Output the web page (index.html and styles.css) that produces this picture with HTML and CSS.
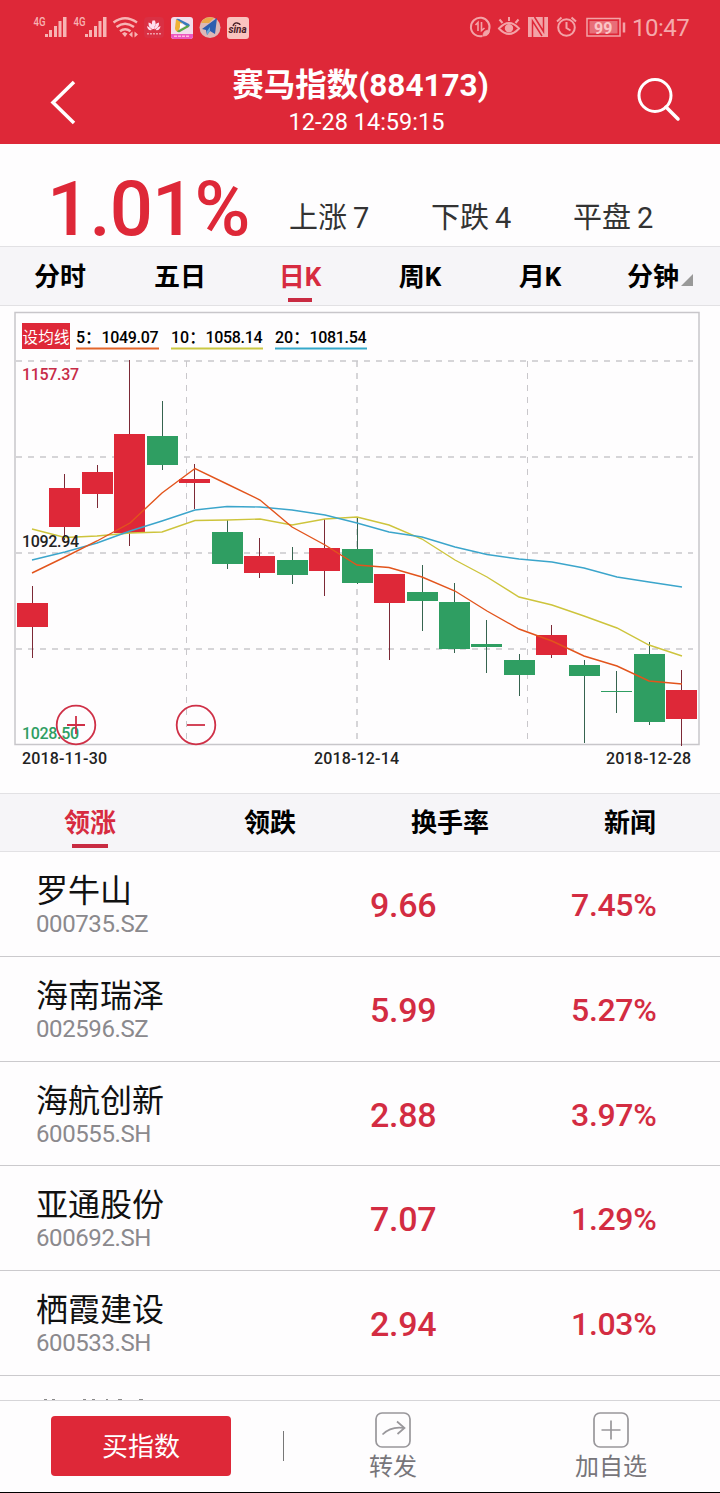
FILE: index.html
```html
<!DOCTYPE html>
<html lang="zh-CN">

<head>
    <meta charset="UTF-8">
    <title>赛马指数(884173)</title>
    <link rel="stylesheet" href="styles.css">
</head>

<body>
    <div class="app">
        <header class="header">
            <div class="status-bar">
                <svg class="status-left" width="220" height="28" viewBox="32 14 220 28">
                    <!-- signal -->
                    <g fill="#f7b3b3">
                        <text class="net" x="33.500" y="26" textLength="12" lengthAdjust="spacingAndGlyphs">4G</text>
                        <path d="M45 34h3v3h-3zM49 30h3v7h-3zM54 26h3v11h-3zM58.500 21h3v16h-3zM63 17h3.500v20h-3.500z" />
                        <text class="net" x="73.500" y="26" textLength="12" lengthAdjust="spacingAndGlyphs">4G</text>
                        <path d="M85 34h3v3h-3zM89 30h3v7h-3zM94 26h3v11h-3zM98.500 21h3v16h-3zM103 17h3.500v20h-3.500z" />
                    </g>
                    <!-- wifi -->
                    <g fill="none" stroke="#f7b3b3" stroke-width="2.400">
                        <path d="M113.500 22.500q11.500-8.500 23.500 0M116.500 27q8.500-6.500 17.500 0M120 31.300q5-4 10.500 0" />
                    </g>
                    <path fill="#f7b3b3" d="M122 33.500l2.500-1.500 3 1.500-2.500 3.500zM129 34.500l3.500-3v6zM138 34.500l-3.500-3v6z" />
                    <!-- app icons -->
                    <rect x="144" y="17" width="20" height="21" rx="4" fill="#d93043" />
                    <path fill="#fde" d="M153 29.500q-5-2-4.500-7 5 1 4.500 7zM154.500 29.500q5-2 4.500-7-5 1-4.500 7zM153 29q-2-5-.5-8.500h2.500q1.500 4-1 8.500zM152 30q-4.500 1-5-4 3 1 5 4zM155.500 30q4.500 1 5-4-3 1-5 4z" />
                    <path stroke="#f09aa5" stroke-width="1.600" stroke-dasharray="2 1" d="M147 33.700h14" />
                    <rect x="171" y="17" width="22" height="22" rx="3" fill="#f3ddeb" />
                    <path fill="#ec57c0" d="M171 34h22v2a3 3 0 0 1-3 3h-16a3 3 0 0 1-3-3z" />
                    <path fill="#efb236" d="M176 19l6 3-4 10q-3-1-3-4z" />
                    <path fill="#3979bb" d="M176 19q2-1 5 1l8 4q2 2-1 3z" />
                    <path fill="#58a846" d="M177 31l11-6q2 2-1 3l-7 4q-2 1-3-1z" />
                    <path fill="#fff" d="M180 23l5 2.700-5 2.800z" />
                    <path stroke="#fbd" stroke-width="1.500" stroke-dasharray="3 1" d="M174 36.200h16" />
                    <circle cx="210" cy="27.500" r="10.500" fill="#dbb9b7" />
                    <path fill="#eaa94a" d="M201 23a10 10 0 0 1 13-5l-5 5z" />
                    <path fill="#2c5eaf" d="M202 29l15-11-2 16-5-3-3 4-1-5z" />
                    <path fill="#69a9d8" d="M207 31l3-4v4l-3 4z" />
                    <rect x="227" y="17" width="22" height="22" rx="3" fill="#fac3bf" />
                    <text class="sina" x="228.500" y="33">sina</text>
                    <path d="M233 26q1-3.500 4-3t3 2" fill="none" stroke="#4b2027" stroke-width="1.300" />
                </svg>
                <svg class="status-right" width="158" height="28" viewBox="468 14 158 28">
                    <g fill="none" stroke="#f3a3a7" stroke-width="2">
                        <path d="M489 30a9.300 9.300 0 1 0-6.500 6" />
                        <path d="M475.500 25l2.500-2.500V31M481.500 22v8.500l3-2.500" stroke-width="1.600" />
                        <path fill="#f3a3a7" d="M483 36q0-6 6.500-6 0 6-6.500 6z" stroke-width="1" />
                        <path d="M499 28.500q10-11 20 0-10 11-20 0zM509 21v-4M502.500 23l-3-3.500M515.500 23l3-3.500" />
                        <circle cx="509" cy="28.300" r="3.200" fill="#f3a3a7" />
                        <circle cx="566.500" cy="27.500" r="8.300" />
                        <path d="M566.500 22v6l4 2.500M557 21.500l4.500-4M576 21.500l-4.500-4" />
                        <rect x="587" y="18.500" width="33" height="17.500" stroke-width="1.500" />
                        <path d="M624 22.500v10" stroke-width="2.500" />
                    </g>
                    <!-- nfc -->
                    <rect x="528" y="17" width="20" height="20" fill="#f3a3a7" />
                    <path fill="none" stroke="#de2838" stroke-width="1.500" d="M532.500 37V21l9.500 15M534.500 17l9 14.500V17" />
                    <rect x="589.500" y="21" width="28" height="12.500" fill="#e86e78" />
                    <text class="battery" x="594" y="33.500">99</text>
                </svg>
                <span class="clock">10:47</span>
            </div>
            <div class="nav">
                <svg class="back" width="32" height="48" viewBox="0 0 32 48">
                    <path d="M25 4L4 24.500 25 45" fill="none" stroke="#fff" stroke-width="3.500" />
                </svg>
                <div class="nav-title">
                    <h1>赛马指数(884173)</h1>
                    <p>12-28 14:59:15</p>
                </div>
                <svg class="search" width="48" height="48" viewBox="0 0 48 48">
                    <circle cx="21" cy="20.500" r="16" fill="none" stroke="#fff" stroke-width="3" />
                    <path d="M32 32l12 12" stroke="#fff" stroke-width="3.500" stroke-linecap="round" />
                </svg>
            </div>
        </header>

        <section class="summary">
            <div class="change">1.01%</div>
            <div class="stat">上涨<span>7</span></div>
            <div class="stat">下跌<span>4</span></div>
            <div class="stat">平盘<span>2</span></div>
        </section>

        <nav class="tabs period">
            <a class="tab">分时</a>
            <a class="tab">五日</a>
            <a class="tab active">日K</a>
            <a class="tab">周K</a>
            <a class="tab">月K</a>
            <a class="tab">分钟<i class="corner"></i></a>
        </nav>

        <svg class="chart" width="720" height="487" viewBox="0 306 720 487">
            <!-- frame and grid -->
            <path class="frame" d="M15 312.500H699V744.500H15z" />
            <g class="grid">
                <path d="M16 361H693M16 457H693M16 553H693M16 649H693" />
                <path d="M357 361V744" />
                <path class="thin" d="M186.500 361V744M527.500 361V744" />
            </g>

            <!-- candles -->
            <g id="candles"></g>

            <!-- moving averages -->
            <g class="ma">
                <polyline stroke="#cdc43c" points="32,529 65,537.500 97,536 130,533 162,532 195,520.500 227,520 260,519 292,525 325,519 357,517 389,525 422,539 455,560 487,577 519,597 552,605 584,616 617,628 649,645 682,656" />
                <polyline stroke="#3ba5cb" points="32,560 65,552 97,543 130,531 162,521 195,510 227,506.500 260,507 292,510 325,515 357,523 389,532 422,537 455,547 487,554.500 519,559 552,562 584,568 617,577 649,582 682,587" />
                <polyline stroke="#e2541c" points="32,573 65,557 97,541 130,523 162,493 195,468.500 227,484 260,500 292,527 325,545 357,565 389,567.500 422,577 455,591 487,611 519,629 552,641 584,656 617,666 649,681 682,684" />
            </g>

            <!-- legend -->
            <rect x="22" y="323" width="48" height="26" fill="#de2838" />
            <text class="set" x="22.500" y="343" textLength="47">设均线</text>
            <g class="legend">
                <text x="76" y="343">5：</text>
                <text x="101.500" y="343" textLength="57">1049.07</text>
                <text x="171" y="343">10：</text>
                <text x="205.500" y="343" textLength="57">1058.14</text>
                <text x="275" y="343">20：</text>
                <text x="309.500" y="343" textLength="57">1081.54</text>
            </g>
            <path stroke="#e2652a" stroke-width="2" d="M76 348.500h83" />
            <path stroke="#c9c843" stroke-width="2" d="M171 348.500h92" />
            <path stroke="#35a8c9" stroke-width="2" d="M275 348.500h92" />

            <!-- axis labels -->
            <g class="axis">
                <text x="22" y="380" textLength="57" fill="#c72c48">1157.37</text>
                <text x="22" y="547" textLength="57" fill="#222">1092.94</text>
                <text x="22" y="739" textLength="57" fill="#2f9e62">1028.50</text>
                <text x="22" y="764" textLength="85" fill="#222">2018-11-30</text>
                <text x="314" y="764" textLength="85" fill="#222">2018-12-14</text>
                <text x="606" y="764" textLength="85" fill="#222">2018-12-28</text>
            </g>

            <!-- zoom buttons -->
            <g class="zoom">
                <circle cx="76" cy="725" r="19.300" />
                <path d="M67 725h18M76 716v18" />
                <circle cx="196" cy="725" r="19.300" />
                <path d="M187 725h18" />
            </g>
        </svg>

        <nav class="tabs rank">
            <a class="tab active">领涨</a>
            <a class="tab">领跌</a>
            <a class="tab">换手率</a>
            <a class="tab">新闻</a>
        </nav>

        <ul class="stocks">
            <li class="stock">
                <div class="name">罗牛山<small>000735.SZ</small></div>
                <div class="price">9.66</div>
                <div class="rate">7.45%</div>
            </li>
            <li class="stock">
                <div class="name">海南瑞泽<small>002596.SZ</small></div>
                <div class="price">5.99</div>
                <div class="rate">5.27%</div>
            </li>
            <li class="stock">
                <div class="name">海航创新<small>600555.SH</small></div>
                <div class="price">2.88</div>
                <div class="rate">3.97%</div>
            </li>
            <li class="stock">
                <div class="name">亚通股份<small>600692.SH</small></div>
                <div class="price">7.07</div>
                <div class="rate">1.29%</div>
            </li>
            <li class="stock">
                <div class="name">栖霞建设<small>600533.SH</small></div>
                <div class="price">2.94</div>
                <div class="rate">1.03%</div>
            </li>
            <li class="stock">
                <svg class="peek" width="120" height="3" viewBox="36 0 120 3">
                    <path d="M44 1h3M52 1h3M83 1h3M92 1h3M106 1h2M118 1h4M139 1h4" stroke="#666" stroke-width="1.500" />
                </svg>
            </li>
        </ul>

        <footer class="footer">
            <button class="buy">买指数</button>
            <span class="divider"></span>
            <div class="action share">
                <svg width="36" height="36" viewBox="0 0 36 36">
                    <rect x="1" y="1" width="34" height="34" rx="6" />
                    <path d="M7.500 22.500Q16 14 29 16M22 9.500l7.500 6.500-7 6" />
                </svg>
                转发
            </div>
            <div class="action add">
                <svg width="36" height="36" viewBox="0 0 36 36">
                    <rect x="1" y="1" width="34" height="34" rx="6" />
                    <path d="M8.500 18h19M18 8.500v19" />
                </svg>
                加自选
            </div>
        </footer>
    </div>

    <script>
        // x, body top, body bottom, wick top, wick bottom, up
        var candles = [
            [17, 603, 627, 586, 658, 1],
            [49, 488, 527, 474, 540, 1],
            [82, 472, 494, 465, 508, 1],
            [114, 434, 533, 360, 546, 1],
            [147, 436, 465, 401, 470, 0],
            [179, 479, 483, 464, 509, 1],
            [212, 532, 564, 520, 569, 0],
            [244, 556, 573, 538, 578, 1],
            [277, 560, 575, 547, 584, 0],
            [309, 548, 571, 519, 596, 1],
            [342, 549, 583, 517, 584, 0],
            [374, 574, 603, 574, 660, 1],
            [407, 592, 601, 565, 631, 0],
            [439, 602, 649, 583, 653, 0],
            [471, 644, 647, 620, 673, 0],
            [504, 660, 675, 654, 696, 0],
            [536, 635, 655, 625, 658, 1],
            [569, 665, 676, 660, 743, 0],
            [601, 691, 692, 671, 713, 0],
            [634, 654, 722, 642, 725, 0],
            [666, 690, 719, 670, 746, 1]
        ];

        var html = "";
        for (var i = 0; i < candles.length; i++) {
            var c = candles[i];
            html += '<g class="' + (c[5] ? "up" : "down") + '">' +
                '<path d="M' + (c[0] + 15.5) + ' ' + c[3] + 'V' + c[4] + '"/>' +
                '<rect x="' + c[0] + '" y="' + c[1] + '" width="31" height="' + (c[2] - c[1]) + '"/></g>';
        }
        document.getElementById("candles").innerHTML = html;
    </script>
</body>

</html>
```

FILE: styles.css
```css
* {
    box-sizing: border-box;
}

body {
    margin: 0;
    background: #fff;
    font-family: Roboto, "Noto Sans CJK SC", sans-serif;
    color: #111;
}

.app {
    display: flex;
    flex-direction: column;
    width: 720px;
    height: 1493px;
    overflow: hidden;
    background: #fefdfe;
}

/* header */
.header {
    flex: none;
    height: 144px;
    background: #de2838;
    color: #fff;
}

.status-bar {
    display: flex;
    height: 56px;
    padding: 14px 30px 0 32px;
}

.status-right {
    margin-left: auto;
}

.net {
    font-size: 13px;
    font-weight: 500;
}

.sina {
    font-size: 10px;
    font-weight: 700;
    font-style: italic;
    fill: #4b2027;
}

.battery {
    font-size: 16px;
    font-weight: 700;
    fill: #fbc5c6;
}

.clock {
    width: 58px;
    margin-left: 6px;
    font-size: 24px;
    line-height: 28px;
    letter-spacing: -0.5px;
    color: #f5a9ab;
}

.nav {
    display: flex;
    justify-content: space-between;
    padding: 0 38px 0 49px;
}

.back {
    margin-top: 22px;
}

.search {
    margin-top: 19px;
}

.nav-title {
    width: 400px;
    margin-left: 6px;
    text-align: center;
}

.nav-title h1 {
    margin: 10px 0 0;
    font-size: 31.500px;
    line-height: 40px;
    font-weight: 700;
}

.nav-title p {
    margin: 1px 0 0 12px;
    font-size: 23.500px;
    line-height: 30px;
}

/* summary */
.summary {
    display: flex;
    flex: none;
    height: 102px;
}

.change {
    width: 289px;
    padding: 25px 0 0 47px;
    font-size: 76px;
    line-height: 80px;
    font-weight: 500;
    letter-spacing: -0.8px;
    color: #de2838;
}

.stat {
    width: 142px;
    padding-top: 54px;
    font-size: 29px;
    line-height: 40px;
    color: #333;
}

.stat span {
    margin-left: 6px;
}

/* tabs */
.tabs {
    display: flex;
    flex: none;
    height: 60px;
    border-top: 1px solid #e2e1e4;
    border-bottom: 1px solid #e2e1e4;
    background: #f6f5f8;
}

.tab {
    position: relative;
    width: 25%;
    text-align: center;
    font-size: 26px;
    line-height: 58px;
    font-weight: 700;
    color: #000;
}

.tab.active {
    color: #d72b40;
}

.tab.active::after {
    content: "";
    position: absolute;
    left: 50%;
    bottom: 3px;
    width: 24px;
    height: 4px;
    margin-left: -12px;
    background: #c92b42;
}

.period .tab {
    width: 120px;
    line-height: 60px;
}

.rank .tab.active::after {
    width: 36px;
    margin-left: -18px;
}

.corner {
    display: inline-block;
    margin-left: 2px;
    border-left: 12px solid transparent;
    border-bottom: 12px solid #999;
}

/* chart */
.chart {
    display: block;
    flex: none;
}

.frame {
    fill: none;
    stroke: #c8c6ca;
    stroke-width: 1.500;
}

.grid path {
    fill: none;
    stroke: #c9c7cb;
    stroke-width: 1.500;
    stroke-dasharray: 6 6;
}

.grid .thin {
    stroke-width: 1;
}

.up {
    fill: #de2838;
    stroke: #7c2936;
}

.down {
    fill: #2f9e62;
    stroke: #36634f;
}

.up rect,
.down rect {
    stroke: none;
}

.ma polyline {
    fill: none;
    stroke-width: 1.400;
}

.set {
    font-size: 15.500px;
    fill: #fff;
}

.legend,
.axis {
    font-size: 16px;
    font-weight: 500;
}

.zoom {
    fill: none;
    stroke: #cf3047;
    stroke-width: 1.800;
}

/* stocks */
.rank {
    height: 59px;
}

.stocks {
    flex: 1;
    min-height: 0;
    margin: 0;
    padding: 0;
    overflow: hidden;
    list-style: none;
}

.stock {
    display: flex;
    height: 104.800px;
    padding-left: 36px;
    border-bottom: 1px solid #cbcacd;
}

.name {
    width: 334px;
    padding-top: 18px;
    font-size: 32px;
    line-height: 42px;
}

.name small {
    display: block;
    font-size: 24px;
    line-height: 24px;
    letter-spacing: -0.4px;
    color: #8b898d;
}

.price,
.rate {
    width: 201px;
    line-height: 107px;
    font-size: 34px;
    font-weight: 500;
    letter-spacing: -0.3px;
    color: #d32c42;
}

.rate {
    width: 149px;
    font-size: 32px;
}

.peek {
    margin-top: 23px;
}

/* footer */
.footer {
    display: flex;
    flex: none;
    height: 93px;
    padding: 15px 0 0 51px;
    border-top: 1px solid #d6d5d8;
    border-bottom: 1px solid #000;
}

.buy {
    width: 180px;
    height: 60px;
    padding: 2px 0 0;
    border: 0;
    border-radius: 4px;
    background: #de2838;
    font: 26px/58px Roboto, "Noto Sans CJK SC", sans-serif;
    color: #fff;
}

.divider {
    width: 1px;
    height: 30px;
    margin: 15px 0 0 52px;
    background: #777;
}

.action {
    display: flex;
    flex-direction: column;
    align-items: center;
    width: 120px;
    margin: -4px 0 0 49px;
    font-size: 24px;
    line-height: 38px;
    color: #77757a;
}

.add {
    margin-left: 98px;
}

.action svg {
    flex: none;
    fill: none;
    stroke: #99979b;
    stroke-width: 1.700;
}
```
